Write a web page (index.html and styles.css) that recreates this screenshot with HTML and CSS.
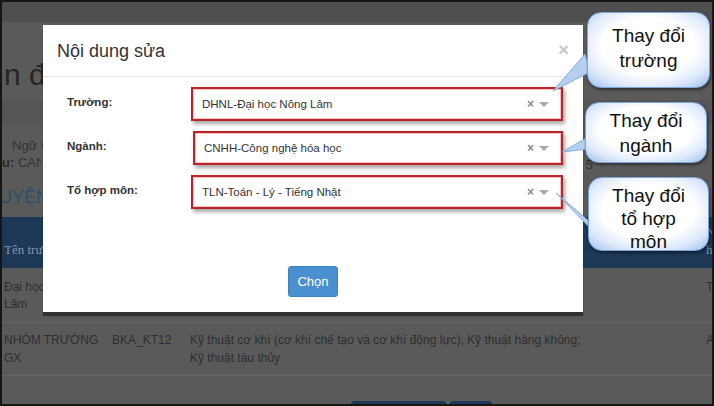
FILE: index.html
```html
<!DOCTYPE html>
<html lang="vi">
<head>
<meta charset="utf-8">
<title>Nội dung sửa</title>
<link rel="stylesheet" href="styles.css">
</head>
<body>
<div class="frame">
  <div class="page">
    <div class="topbar"></div>
    <div class="heading"><span class="clip">n đăng ký</span></div>
    <div class="tabs"></div>
    <div class="info">
      <div class="info-line indent"><span class="clip c2">Ngữ văn</span></div>
      <div class="info-line split"><span class="clip"><b>u:</b> CANDIDATE</span><span class="num">5</span></div>
      <div class="section"><span class="clip c3">UYỆN VỌNG</span></div>
    </div>
    <div class="thead">
      <div class="th"><span class="clip">Tên trường</span></div>
      <div class="th"></div>
      <div class="th"></div>
      <div class="th">N<br>h</div>
    </div>
    <div class="trow r1">
      <div class="td"><span class="clip">Đại học<br>Lâm</span></div>
      <div class="td"></div>
      <div class="td"></div>
      <div class="td">T</div>
    </div>
    <div class="trow r2">
      <div class="td">NHÓM TRƯỜNG<br>GX</div>
      <div class="td">BKA_KT12</div>
      <div class="td">Kỹ thuật cơ khí (cơ khí chế tạo và cơ khí động lực); Kỹ thuật hàng không;<br>Kỹ thuật tàu thủy</div>
      <div class="td">A</div>
    </div>
    <div class="bottom-btns">
      <span class="bb wide"></span>
      <span class="bb narrow"></span>
    </div>
  </div>

  <div class="modal">
    <div class="modal-header">
      <span class="modal-title">Nội dung sửa</span>
      <span class="close">×</span>
    </div>
    <div class="modal-body">
      <div class="form-row">
        <label class="lbl">Trường:</label>
        <div class="hl">
          <div class="sel"><span class="val">DHNL-Đại học Nông Lâm</span><span class="clr">×</span><span class="arr"></span></div>
        </div>
      </div>
      <div class="form-row">
        <label class="lbl">Ngành:</label>
        <div class="hl hl2">
          <div class="sel"><span class="val">CNHH-Công nghệ hóa học</span><span class="clr">×</span><span class="arr"></span></div>
        </div>
      </div>
      <div class="form-row">
        <label class="lbl">Tổ hợp môn:</label>
        <div class="hl">
          <div class="sel"><span class="val">TLN-Toán - Lý - Tiếng Nhật</span><span class="clr">×</span><span class="arr"></span></div>
        </div>
      </div>
    </div>
    <div class="modal-footer">
      <button class="btn">Chọn</button>
    </div>
  </div>

  <svg class="tails" width="710" height="402" viewBox="0 0 710 402">
    <polygon points="551,89 583,52 588,70" />
    <polygon points="560,150 586,135 586,147" />
    <polygon points="554,191 588,220 594,232" />
  </svg>

  <div class="bubble b1">Thay đổi<br>trường</div>
  <div class="bubble b2">Thay đổi<br>ngành</div>
  <div class="bubble b3">Thay đổi<br>tổ hợp<br>môn</div>
</div>
</body>
</html>
```

FILE: styles.css
```css
html, body {
  margin: 0;
  padding: 0;
}
.frame {
  width: 714px;
  height: 406px;
  box-sizing: border-box;
  border: 2px solid #161616;
  position: relative;
  overflow: hidden;
  background: #5a5a5a;
  font-family: "Liberation Sans", Arial, sans-serif;
}
.page {
  width: 710px;
}
.clip {
  display: inline-block;
  width: 39px;
  overflow: hidden;
  white-space: nowrap;
  vertical-align: top;
}
.c2 {
  width: 31px;
}
.c3 {
  width: 42px;
}
.topbar {
  height: 20px;
  background: #4f4f4f;
}
.heading {
  height: 78px;
  box-sizing: border-box;
  padding: 36px 0 0 2px;
  font-size: 30px;
  line-height: 34px;
  color: #262626;
  white-space: nowrap;
}
.tabs {
  height: 25px;
  background: #555555;
}
.info {
  height: 92px;
  box-sizing: border-box;
  padding-top: 12px;
  color: #333333;
  font-size: 13px;
}
.info-line {
  line-height: 17px;
  white-space: nowrap;
}
.indent {
  padding-left: 10px;
}
.split {
  display: flex;
}
.split b {
  color: #2a2a2a;
}
.num {
  margin-left: auto;
  padding-right: 119px;
  margin-top: 2px;
}
.section {
  margin-top: 12px;
  margin-left: -3px;
  font-size: 18px;
  line-height: 24px;
  color: #2c4d6c;
  white-space: nowrap;
}
.thead, .trow {
  display: grid;
  grid-template-columns: 108px 78px 514px 1fr;
  padding-left: 2px;
}
.thead {
  height: 51px;
  box-sizing: border-box;
  background: #1c3856;
  align-items: end;
  padding-bottom: 9px;
  font-family: "Liberation Serif", "Times New Roman", serif;
  font-size: 13px;
  line-height: 18px;
  color: #8593a2;
}
.th, .td {
  white-space: nowrap;
}
.trow {
  box-sizing: border-box;
  border-bottom: 1px solid #656565;
  color: #2f2f2f;
  font-size: 12px;
  align-items: start;
}
.r1 {
  height: 55px;
  padding-top: 11px;
  line-height: 17px;
}
.r2 {
  height: 53px;
  padding-top: 8px;
  line-height: 18px;
}
.trow .td:last-child, .thead .th:last-child {
  padding-left: 2px;
}
.bottom-btns {
  display: flex;
  gap: 4px;
  padding-left: 349px;
  margin-top: 25px;
}
.bb {
  display: block;
  height: 12px;
  background: #1c3856;
  border-radius: 3px 3px 0 0;
}
.wide { width: 95px; }
.narrow { width: 42px; }

/* modal */
.modal {
  position: absolute;
  left: 41px;
  top: 23px;
  width: 540px;
  height: 287px;
  background: #ffffff;
  box-shadow: 0 4px 1px rgba(0, 0, 0, 0.45);
  color: #333333;
}
.modal-header {
  height: 51px;
  border-bottom: 1px solid #e5e5e5;
  display: flex;
  align-items: center;
  justify-content: space-between;
  padding: 0 14px 0 14px;
}
.modal-title {
  font-size: 18px;
  line-height: 24px;
  color: #333333;
}
.close {
  font-size: 19px;
  font-weight: bold;
  color: #c8c8c8;
  line-height: 20px;
  margin-top: -1px;
}
.modal-body {
  padding: 5px 20px 0 24px;
}
.form-row {
  display: grid;
  grid-template-columns: 124px 1fr;
  height: 44px;
  align-items: center;
}
.lbl {
  font-size: 11.5px;
  font-weight: bold;
  color: #333333;
  padding-bottom: 4px;
}
.hl {
  height: 34px;
  box-sizing: border-box;
  border: 2px solid #bb2329;
  box-shadow: 2px 3px 4px rgba(0, 0, 0, 0.35), inset 0 0 0 1px #eec3c5;
  padding: 2px;
}
.hl2 {
  margin-left: 2px;
}
.sel {
  height: 26px;
  display: flex;
  align-items: center;
  padding: 0 10px 0 7px;
  font-size: 11.5px;
  color: #333333;
  background: #ffffff;
}
.val {
  flex: 1;
  white-space: nowrap;
}
.clr {
  font-size: 12px;
  font-weight: bold;
  color: #8a8a8a;
  margin-right: 5px;
}
.arr {
  width: 0;
  height: 0;
  border-left: 5px solid transparent;
  border-right: 5px solid transparent;
  border-top: 5px solid #a8a8a8;
  margin-top: 1px;
}
.modal-footer {
  display: flex;
  justify-content: center;
  padding-top: 52px;
}
.btn {
  width: 50px;
  height: 31px;
  background: #4a8fd0;
  border: 1px solid #3f82c2;
  border-radius: 3px;
  color: #ffffff;
  font-family: "Liberation Sans", Arial, sans-serif;
  font-size: 13px;
  padding: 0;
}

/* callouts */
.tails {
  position: absolute;
  left: 0;
  top: 0;
}
.tails polygon {
  fill: #b3cff1;
  stroke: #86abdc;
  stroke-width: 1;
  stroke-linejoin: round;
}
.bubble {
  position: absolute;
  box-sizing: border-box;
  display: flex;
  align-items: center;
  justify-content: center;
  text-align: center;
  border: 1px solid #7ea5dc;
  border-radius: 14px;
  background: radial-gradient(ellipse 70% 70% at 50% 45%, #ffffff 55%, #dde9fb 80%, #acc9f0 100%);
  box-shadow: 1px 2px 3px rgba(0, 0, 0, 0.45);
  font-size: 19px;
  line-height: 25px;
  color: #111111;
}
.b1 {
  left: 585px;
  top: 10px;
  width: 123px;
  height: 76px;
  padding-bottom: 4px;
}
.b2 {
  left: 583px;
  top: 100px;
  width: 122px;
  height: 61px;
}
.b3 {
  left: 586px;
  top: 175px;
  width: 121px;
  height: 74px;
  line-height: 23px;
  padding-top: 8px;
}
```
